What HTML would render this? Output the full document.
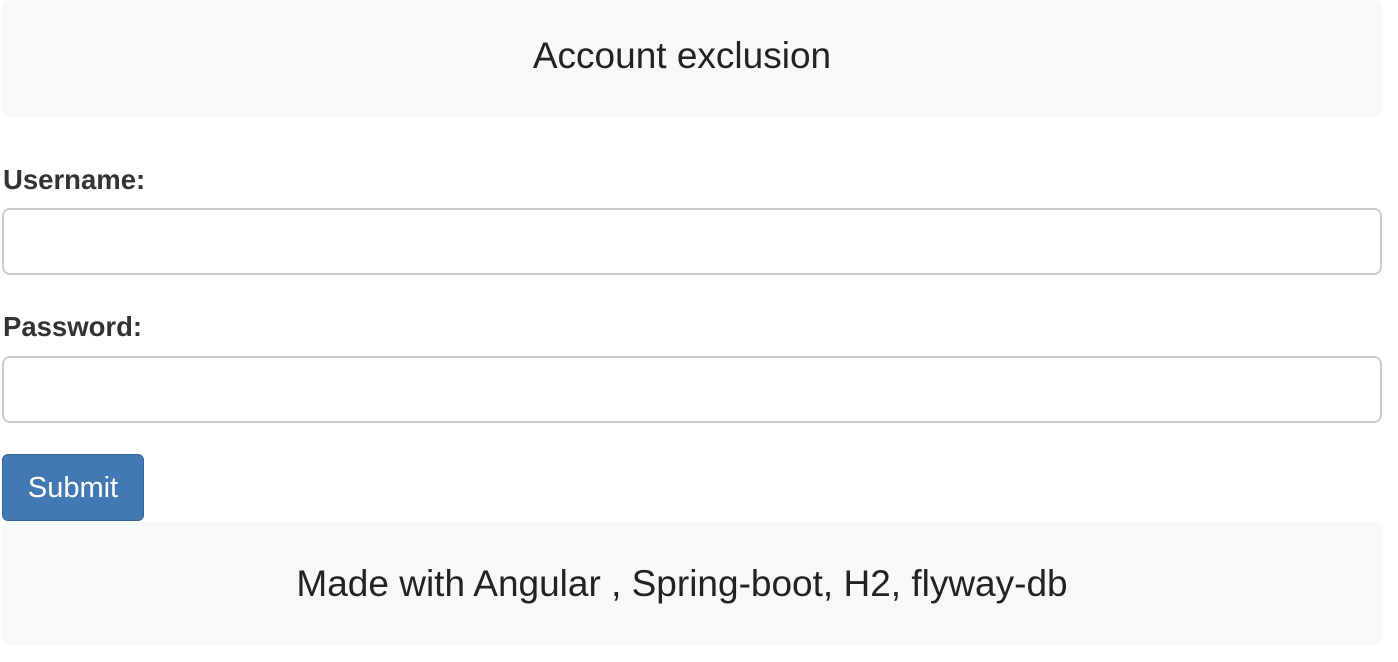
<!DOCTYPE html>
<html><head><style>
body{margin:0;width:1398px;height:662px;background:#fff;font-family:"Liberation Sans",sans-serif;color:#333;position:relative}
.box{position:absolute;left:2px;width:1380px;background:#f7f8fa;border-radius:6px;text-align:center;color:#222;box-sizing:border-box;padding-right:20px}
.hdr{top:0;height:117px;font-size:37px;line-height:112px}
.ftr{top:522px;height:123px;font-size:37px;line-height:124px}
label{position:absolute;left:3px;font-weight:bold;font-size:27.5px;color:#333}
.inp{position:absolute;left:2px;width:1376px;height:63px;border:2px solid #ccc;border-radius:8px;box-sizing:content-box}
.btn{position:absolute;left:2px;top:454px;width:142px;height:67px;background:#4279b3;border:1px solid #336699;border-radius:6px;color:#fff;font-size:29px;line-height:66px;text-align:center;box-sizing:border-box}
</style></head><body>
<div class="box hdr">Account exclusion</div>
<label style="top:164px">Username:</label>
<div class="inp" style="top:208px"></div>
<label style="top:311px">Password:</label>
<div class="inp" style="top:356px"></div>
<div class="btn">Submit</div>
<div class="box ftr">Made with Angular , Spring-boot, H2, flyway-db</div>
</body></html>
